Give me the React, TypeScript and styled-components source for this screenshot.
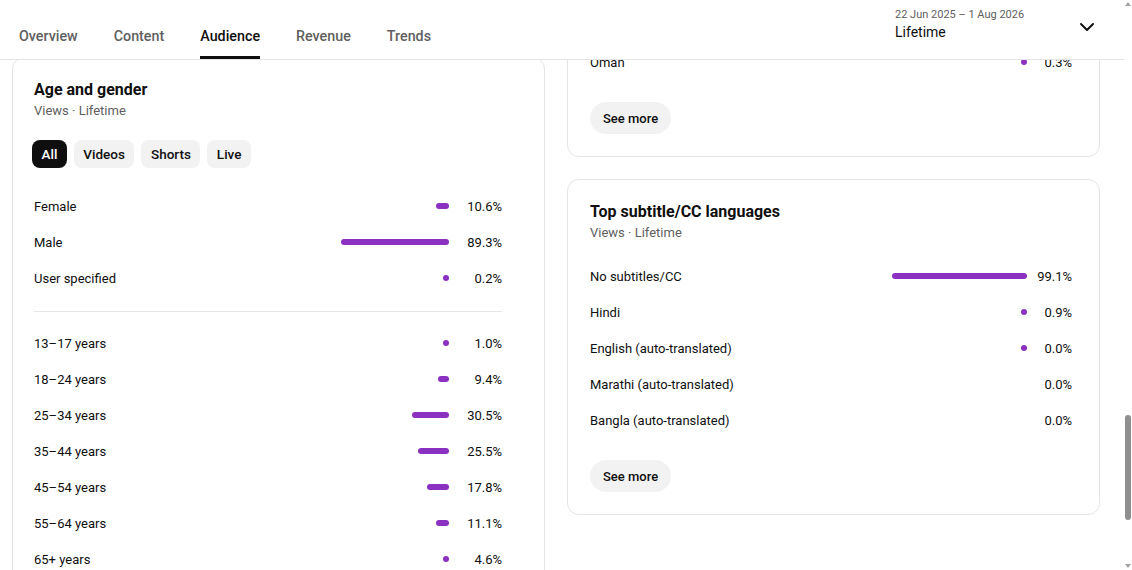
import React, { useCallback, useLayoutEffect, useRef, useState } from "react";
import styled, { createGlobalStyle } from "styled-components";
import { ChevronDown } from "lucide-react";

const GlobalStyle = createGlobalStyle`
  html, body {
    margin: 0;
    padding: 0;
    height: 100%;
    overflow: hidden;
    background: #fff;
  }
  body {
    font-family: Roboto, "Noto Sans", Arial, sans-serif;
    color: #0f0f0f;
  }
  #root { height: 100%; }
`;

const Page = styled.div`
  display: flex;
  height: 100vh;
`;

const ScrollArea = styled.div`
  flex: 1;
  min-width: 0;
  height: 100%;
  overflow-y: auto;
  overflow-x: hidden;
  scrollbar-width: none;
  &::-webkit-scrollbar {
    display: none;
  }
`;

/* ---------- Scroll rail (custom scrollbar) ---------- */

const ScrollRail = styled.div`
  width: 8px;
  display: flex;
  flex-direction: column;
  background: #fff;
`;

const RailArrow = styled.div<{ $down?: boolean }>`
  height: 12px;
  display: flex;
  justify-content: center;
  align-items: ${(p) => (p.$down ? "flex-end" : "flex-start")};
  padding: 2px 0;
  box-sizing: border-box;

  &::before {
    content: "";
    width: 0;
    height: 0;
    border-left: 3px solid transparent;
    border-right: 3px solid transparent;
    ${(p) =>
      p.$down
        ? "border-top: 4px solid #a3a3a3;"
        : "border-bottom: 4px solid #a3a3a3;"}
  }
`;

const RailTrack = styled.div`
  flex: 1;
  position: relative;
`;

const RailThumb = styled.div`
  position: absolute;
  left: 1px;
  right: 1px;
  border-radius: 3px;
  background: #8f8f8f;
`;

/* ---------- Header ---------- */

const Header = styled.header`
  position: sticky;
  top: 0;
  z-index: 2;
  height: 60px;
  box-sizing: border-box;
  background: #fff;
  border-bottom: 1px solid #e5e5e5;
  display: flex;
  justify-content: space-between;
  align-items: stretch;
`;

const Tabs = styled.nav`
  display: flex;
  padding-left: 1px;
`;

const Tab = styled.div`
  display: flex;
  align-items: flex-end;
  padding: 0 18px;
  cursor: pointer;
`;

const TabLabel = styled.span<{ $active?: boolean }>`
  font-size: 14.3px;
  font-weight: 500;
  line-height: 22px;
  padding-bottom: 9px;
  color: ${(p) => (p.$active ? "#0f0f0f" : "#606060")};
  border-bottom: 3px solid ${(p) => (p.$active ? "#0f0f0f" : "transparent")};
`;

const RangeSelector = styled.div`
  display: flex;
  align-items: center;
  align-self: flex-start;
  padding: 8px 25px 0 0;
  cursor: pointer;
`;

const RangeText = styled.div`
  width: 180px;
  display: flex;
  flex-direction: column;
`;

const RangeDates = styled.span`
  font-size: 11px;
  line-height: 14px;
  color: #606060;
`;

const RangeLabel = styled.span`
  font-size: 14px;
  line-height: 20px;
  color: #0f0f0f;
`;

const ChevronBox = styled.span`
  display: flex;
  width: 24px;
  height: 24px;
  margin-top: 4px;
  color: #0f0f0f;
`;

/* ---------- Content ---------- */

const Content = styled.main`
  display: grid;
  grid-template-columns: 1fr 1fr;
  column-gap: 22px;
  align-items: start;
  padding: 24px 24px 175px 12px;
`;

const Column = styled.div`
  display: flex;
  flex-direction: column;
  gap: 22px;
`;

const Card = styled.section<{ $padLeft: number; $padRight: number; $height?: number }>`
  border: 1px solid #e5e5e5;
  border-radius: 12px;
  background: #fff;
  padding: 20px ${(p) => p.$padRight}px 22px ${(p) => p.$padLeft}px;
  ${(p) => (p.$height ? `height: ${p.$height}px; box-sizing: border-box;` : "")}
`;

const CardTitle = styled.h2`
  margin: 0;
  font-size: 16px;
  line-height: 24px;
  font-weight: 700;
  color: #0f0f0f;
`;

const CardSubtitle = styled.div`
  font-size: 13px;
  line-height: 18px;
  color: #606060;
`;

const ChipRow = styled.div`
  display: flex;
  gap: 7px;
  margin: 20px 0 0 -2px;
`;

const Chip = styled.button<{ $active?: boolean }>`
  height: 28px;
  padding: 0 9.5px;
  border: none;
  border-radius: 8px;
  font-family: inherit;
  font-size: 13.5px;
  font-weight: 500;
  background: ${(p) => (p.$active ? "#0f0f0f" : "#f2f2f2")};
  color: ${(p) => (p.$active ? "#fff" : "#0f0f0f")};
  cursor: pointer;
`;

const RowList = styled.div<{ $top: number }>`
  margin-top: ${(p) => p.$top}px;
`;

const Row = styled.div<{ $track: number; $pct: number }>`
  display: grid;
  grid-template-columns: 1fr ${(p) => p.$track}px ${(p) => p.$pct}px;
  align-items: center;
  height: 36px;
`;

const RowLabel = styled.span`
  font-size: 13px;
  color: #0f0f0f;
`;

const BarTrack = styled.div`
  display: flex;
  justify-content: flex-end;
`;

const Bar = styled.div`
  height: 6px;
  border-radius: 3px;
  background: #8b31c1;
`;

const Pct = styled.span`
  text-align: right;
  font-size: 13px;
  color: #0f0f0f;
`;

const Divider = styled.hr`
  border: none;
  border-top: 1px solid #e5e5e5;
  margin: 15px 0 13px;
`;

const SeeMore = styled.button`
  margin-top: 22px;
  height: 32px;
  padding: 0 13px;
  border: none;
  border-radius: 16px;
  background: #f2f2f2;
  font-family: inherit;
  font-size: 13px;
  font-weight: 500;
  color: #0f0f0f;
  cursor: pointer;
`;

/* ---------- Data ---------- */

type Item = { label: string; pct: string; value: number };

const gender: Item[] = [
  { label: "Female", pct: "10.6%", value: 10.6 },
  { label: "Male", pct: "89.3%", value: 89.3 },
  { label: "User specified", pct: "0.2%", value: 0.2 },
];

const ages: Item[] = [
  { label: "13–17 years", pct: "1.0%", value: 1.0 },
  { label: "18–24 years", pct: "9.4%", value: 9.4 },
  { label: "25–34 years", pct: "30.5%", value: 30.5 },
  { label: "35–44 years", pct: "25.5%", value: 25.5 },
  { label: "45–54 years", pct: "17.8%", value: 17.8 },
  { label: "55–64 years", pct: "11.1%", value: 11.1 },
  { label: "65+ years", pct: "4.6%", value: 4.6 },
];

const geographies: Item[] = [
  { label: "India", pct: "78.4%", value: 78.4 },
  { label: "Bangladesh", pct: "6.2%", value: 6.2 },
  { label: "Nepal", pct: "3.1%", value: 3.1 },
  { label: "United States", pct: "2.4%", value: 2.4 },
  { label: "Pakistan", pct: "1.8%", value: 1.8 },
  { label: "United Arab Emirates", pct: "1.2%", value: 1.2 },
  { label: "Saudi Arabia", pct: "0.9%", value: 0.9 },
  { label: "Qatar", pct: "0.5%", value: 0.5 },
  { label: "Kuwait", pct: "0.4%", value: 0.4 },
  { label: "Oman", pct: "0.3%", value: 0.3 },
];

const subtitles: Item[] = [
  { label: "No subtitles/CC", pct: "99.1%", value: 99.1 },
  { label: "Hindi", pct: "0.9%", value: 0.9 },
  { label: "English (auto-translated)", pct: "0.0%", value: 0.01 },
  { label: "Marathi (auto-translated)", pct: "0.0%", value: 0 },
  { label: "Bangla (auto-translated)", pct: "0.0%", value: 0 },
];

const tabs = ["Overview", "Content", "Audience", "Revenue", "Trends"];

const BarRows: React.FC<{ items: Item[]; track: number; pctWidth: number }> = ({
  items,
  track,
  pctWidth,
}) => (
  <>
    {items.map((it) => (
      <Row key={it.label} $track={track} $pct={pctWidth}>
        <RowLabel>{it.label}</RowLabel>
        <BarTrack>
          {it.value > 0 && (
            <Bar style={{ width: Math.max(6, Math.round((track * it.value) / 100)) }} />
          )}
        </BarTrack>
        <Pct>{it.pct}</Pct>
      </Row>
    ))}
  </>
);

export default function App() {
  const scrollRef = useRef<HTMLDivElement>(null);
  const trackRef = useRef<HTMLDivElement>(null);
  const ageRef = useRef<HTMLElement>(null);
  const [thumb, setThumb] = useState({ top: 0, height: 0 });

  const updateThumb = useCallback(() => {
    const el = scrollRef.current;
    const track = trackRef.current;
    if (!el || !track) return;
    const t = track.clientHeight;
    setThumb({
      top: (t * el.scrollTop) / el.scrollHeight,
      height: (t * el.clientHeight) / el.scrollHeight,
    });
  }, []);

  useLayoutEffect(() => {
    const el = scrollRef.current;
    const card = ageRef.current;
    if (!el || !card) return;
    const offset =
      card.getBoundingClientRect().top - el.getBoundingClientRect().top + el.scrollTop;
    el.scrollTop = offset - 57;
    updateThumb();
  }, [updateThumb]);

  return (
    <>
      <GlobalStyle />
      <Page>
        <ScrollArea ref={scrollRef} onScroll={updateThumb}>
          <Header>
            <Tabs>
              {tabs.map((t) => (
                <Tab key={t}>
                  <TabLabel $active={t === "Audience"}>{t}</TabLabel>
                </Tab>
              ))}
            </Tabs>
            <RangeSelector>
              <RangeText>
                <RangeDates>22 Jun 2025 – 1 Aug 2026</RangeDates>
                <RangeLabel>Lifetime</RangeLabel>
              </RangeText>
              <ChevronBox>
                <ChevronDown size={24} strokeWidth={2} />
              </ChevronBox>
            </RangeSelector>
          </Header>

          <Content>
            <Column>
              <Card $padLeft={21} $padRight={42} $height={1075}>
                <CardTitle>Returning viewers</CardTitle>
                <CardSubtitle>Views · Lifetime</CardSubtitle>
              </Card>
              <Card $padLeft={21} $padRight={42} $height={1042}>
                <CardTitle>When your viewers are on YouTube</CardTitle>
                <CardSubtitle>Your local time (GMT +0530) · Last 28 days</CardSubtitle>
              </Card>
              <Card $padLeft={21} $padRight={42} ref={ageRef}>
                <CardTitle>Age and gender</CardTitle>
                <CardSubtitle>Views · Lifetime</CardSubtitle>
                <ChipRow>
                  <Chip $active>All</Chip>
                  <Chip>Videos</Chip>
                  <Chip>Shorts</Chip>
                  <Chip>Live</Chip>
                </ChipRow>
                <RowList $top={20}>
                  <BarRows items={gender} track={121} pctWidth={53} />
                </RowList>
                <Divider />
                <BarRows items={ages} track={121} pctWidth={53} />
              </Card>
            </Column>

            <Column>
              <Card $padLeft={22} $padRight={27} $height={875}>
                <CardTitle>Channels your audience watches</CardTitle>
                <CardSubtitle>Last 28 days</CardSubtitle>
              </Card>
              <Card $padLeft={22} $padRight={27} $height={826}>
                <CardTitle>Formats your audience watches</CardTitle>
                <CardSubtitle>Last 28 days</CardSubtitle>
              </Card>
              <Card $padLeft={22} $padRight={27}>
                <CardTitle>Top geographies</CardTitle>
                <CardSubtitle>Views · Lifetime</CardSubtitle>
                <RowList $top={16}>
                  <BarRows items={geographies} track={136} pctWidth={45} />
                </RowList>
                <SeeMore>See more</SeeMore>
              </Card>
              <Card $padLeft={22} $padRight={27}>
                <CardTitle>Top subtitle/CC languages</CardTitle>
                <CardSubtitle>Views · Lifetime</CardSubtitle>
                <RowList $top={16}>
                  <BarRows items={subtitles} track={136} pctWidth={45} />
                </RowList>
                <SeeMore>See more</SeeMore>
              </Card>
            </Column>
          </Content>
        </ScrollArea>
        <ScrollRail>
          <RailArrow />
          <RailTrack ref={trackRef}>
            <RailThumb style={{ top: thumb.top, height: thumb.height }} />
          </RailTrack>
          <RailArrow $down />
        </ScrollRail>
      </Page>
    </>
  );
}
